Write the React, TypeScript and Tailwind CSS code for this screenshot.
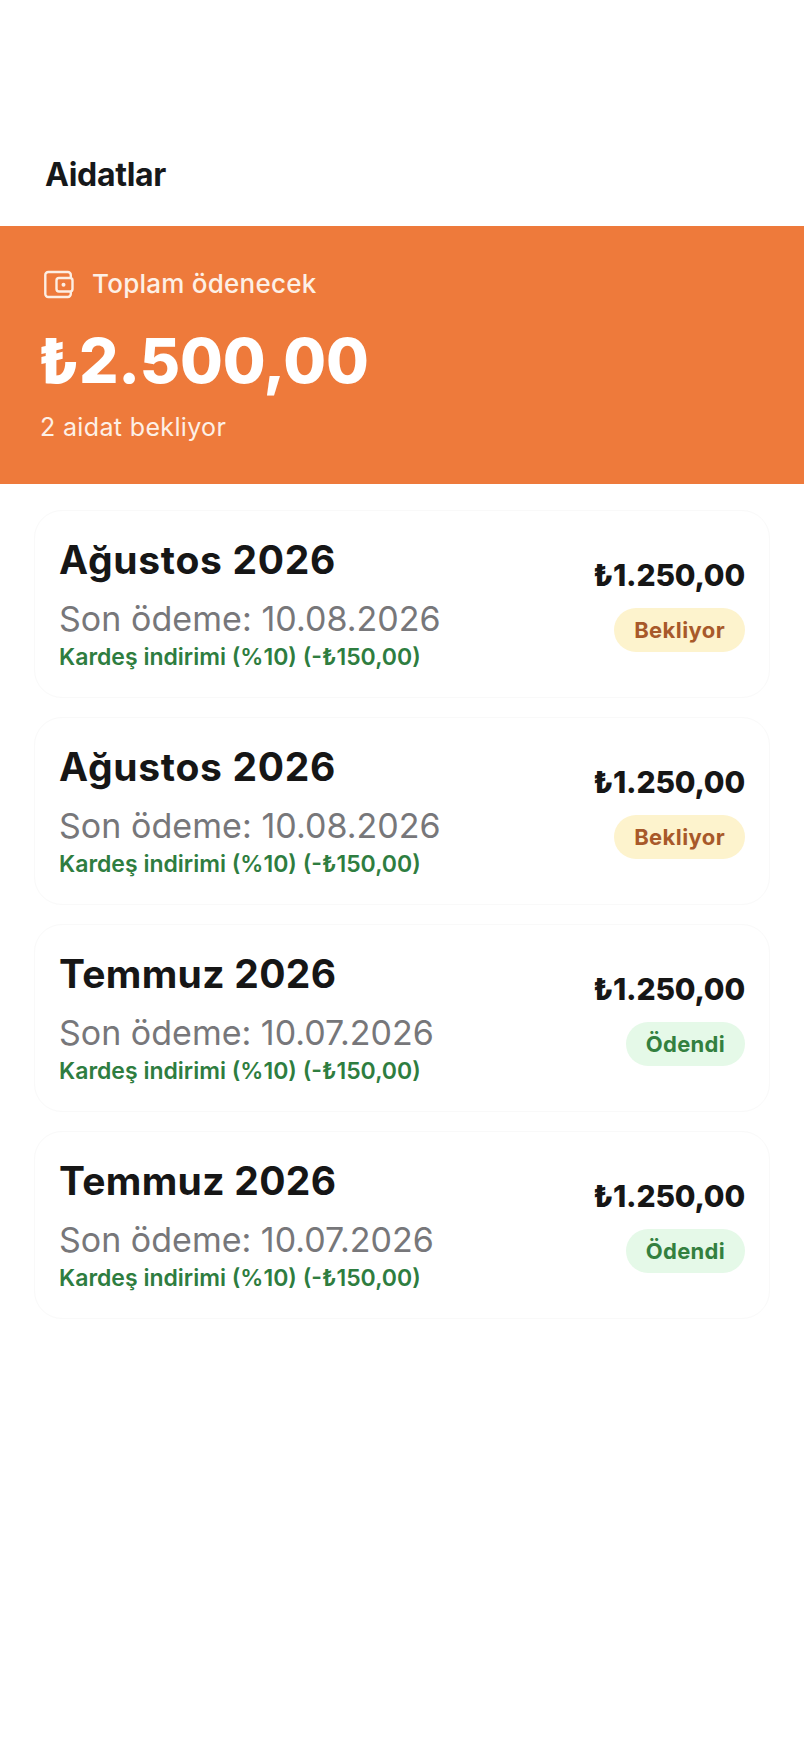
const font = { fontFamily: "Inter, 'Noto Sans', sans-serif" };

function Card({ title, due, status }: { title: string; due: string; status: "wait" | "paid" }) {
  const paid = status === "paid";
  return (
    <div className="flex h-[188px] items-start justify-between rounded-[28px] border border-[#f9f9f9] bg-white pl-6 pr-6 pt-[26px]">
      <div className="flex flex-col">
        <div className={paid ? "text-[39px] font-bold leading-[46px] tracking-[0.3px] text-[#161616]" : "text-[39px] font-bold leading-[46px] tracking-[0.7px] text-[#161616]"}>{title}</div>
        <div className={paid ? "mt-[14px] text-[34px] font-normal leading-[44px] tracking-[0px] text-[#77777a]" : "mt-[14px] text-[34px] font-normal leading-[44px] tracking-[0.05px] text-[#77777a]"}>{due}</div>
        <div className="mt-[3px] text-[23px] font-semibold leading-[26px] tracking-[0px] text-[#2e7d40]">Kardeş indirimi (%10) (-₺150,00)</div>
      </div>
      <div className="flex flex-col items-end pt-[19px]">
        <div className="text-[30px] font-extrabold leading-[38px] tracking-[-0.2px] text-[#161616]">₺1.250,00</div>
        <div
          className={
            paid
              ? "mt-[14px] flex h-[44px] items-center rounded-full bg-[#e5f9e8] px-[20px] text-[22px] font-bold tracking-[0.3px] text-[#33803f]"
              : "mt-[14px] flex h-[44px] items-center rounded-full bg-[#fdf3cd] px-[20px] text-[22px] font-bold tracking-[0.4px] text-[#a8592a]"
          }
        >
          {paid ? "Ödendi" : "Bekliyor"}
        </div>
      </div>
    </div>
  );
}

export default function App() {
  return (
    <div className="min-h-[1748px] w-[804px] bg-white" style={font}>
      <div className="flex h-[226px] items-start pl-[45px] pt-[153px]">
        <h1 className="text-[32px] font-bold leading-[44px] tracking-[-0.3px] text-[#16181a]">Aidatlar</h1>
      </div>
      <div className="flex h-[258px] flex-col bg-[#ee7a3b] pl-[40px] pt-[40px] text-white">
        <div className="flex items-center gap-[18px] pl-[3px]">
          <svg width="31" height="29" viewBox="0 0 31 29" fill="none" stroke="#fdeee3" strokeWidth="2.4" strokeLinejoin="round">
            <rect x="2.3" y="2" width="25.5" height="25" rx="3" />
            <rect x="13.5" y="8" width="16" height="13.5" rx="2.5" fill="#ee7a3b" />
            <circle cx="20.5" cy="14.7" r="2" fill="#fdeee3" stroke="none" />
          </svg>
          <span className="text-[26px] font-medium leading-[36px] tracking-[0.25px] text-[#fdf0e6]">Toplam ödenecek</span>
        </div>
        <div className="-ml-[2px] mt-[21px] text-[62px] font-extrabold leading-[76px] tracking-[-0.2px]">₺2.500,00</div>
        <div className="mt-[11px] text-[25px] leading-[34px] tracking-[0.35px] text-[#fdf0e6]">2 aidat bekliyor</div>
      </div>
      <div className="flex flex-col gap-[19px] px-[34px] pt-[26px]">
        <Card title="Ağustos 2026" due="Son ödeme: 10.08.2026" status="wait" />
        <Card title="Ağustos 2026" due="Son ödeme: 10.08.2026" status="wait" />
        <Card title="Temmuz 2026" due="Son ödeme: 10.07.2026" status="paid" />
        <Card title="Temmuz 2026" due="Son ödeme: 10.07.2026" status="paid" />
      </div>
    </div>
  );
}
